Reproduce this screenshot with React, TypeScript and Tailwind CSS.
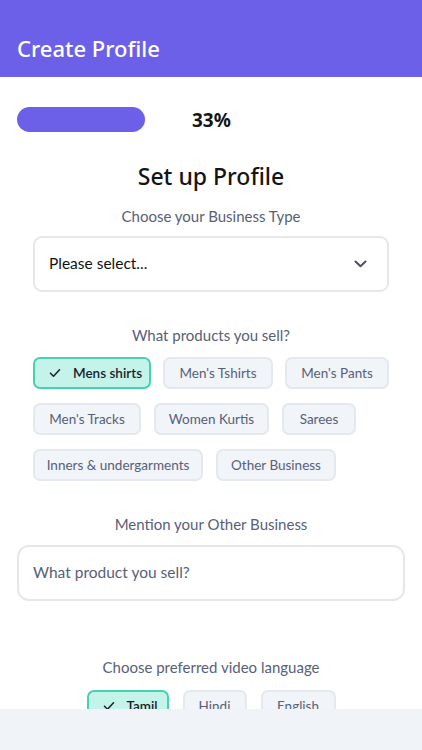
import React from "react";

const Check = () => (
  <svg width="12" height="10" viewBox="0 0 12 10" fill="none" className="shrink-0">
    <path d="M1.5 5.2 L4.5 8.2 L10.5 1.8" stroke="#1f2433" strokeWidth="1.6" strokeLinecap="round" strokeLinejoin="round" />
  </svg>
);

type ChipProps = { label: string; w: string; selected?: boolean };

const Chip = ({ label, w, selected }: ChipProps) =>
  selected ? (
    <div className={`${w} h-[32px] shrink-0 flex items-center gap-[12px] pl-[14px] rounded-[7px] border-2 border-[#48cfb5] bg-[#c4f3ea] text-[13.5px] font-semibold text-[#1a1d2b]`}>
      <Check />
      <span>{label}</span>
    </div>
  ) : (
    <div className={`${w} h-[32px] shrink-0 flex items-center justify-center rounded-[7px] border-2 border-[#e4e8ef] bg-[#f1f4f9] text-[13.5px] text-[#586077]`}>
      {label}
    </div>
  );

export default function App() {
  return (
    <div className="w-[422px] h-[750px] overflow-hidden bg-white flex flex-col relative" style={{ fontFamily: "Lato, 'Noto Sans', sans-serif" }}>
      <div className="h-[77px] bg-[#6c5fe8] flex items-end px-[17px] pb-[14px] shrink-0">
        <h1 className="text-white text-[22px] font-medium leading-[30px]" style={{ fontFamily: "'Noto Sans', sans-serif" }}>
          Create Profile
        </h1>
      </div>

      <div className="flex items-center mt-[30px] px-[17px]">
        <div className="w-[128px] h-[25px] rounded-full bg-[#6c5fe8]" />
        <div className="ml-[47px] text-[19px] font-bold text-[#141414] leading-[24px]" style={{ fontFamily: "'Noto Sans', sans-serif" }}>
          33%
        </div>
      </div>

      <div className="mt-[29px] text-center text-[23px] font-medium text-[#141414] leading-[30px]" style={{ fontFamily: "'Noto Sans', sans-serif" }}>
        Set up Profile
      </div>

      <div className="mt-[15px] text-center text-[15px] text-[#586077] leading-[20px]">
        Choose your Business Type
      </div>

      <div className="mt-[10px] mx-[33px] h-[56px] rounded-[9px] border-2 border-[#e5e7eb] flex items-center justify-between pl-[14px] pr-[20px]">
        <span className="text-[15.5px] text-[#111]">Please select...</span>
        <svg width="13" height="8" viewBox="0 0 13 8" fill="none">
          <path d="M1.5 1.5 L6.5 6.2 L11.5 1.5" stroke="#4b5068" strokeWidth="2" strokeLinecap="round" strokeLinejoin="round" />
        </svg>
      </div>

      <div className="mt-[33px] text-center text-[15px] text-[#586077] leading-[20px]">
        What products you sell?
      </div>

      <div className="mt-[12px] px-[33px] flex flex-col gap-[14px]">
        <div className="flex gap-[12px]">
          <Chip label="Mens shirts" w="w-[118px]" selected />
          <Chip label="Men's Tshirts" w="w-[110px]" />
          <Chip label="Men's Pants" w="w-[104px]" />
        </div>
        <div className="flex gap-[13px]">
          <Chip label="Men's Tracks" w="w-[108px]" />
          <Chip label="Women Kurtis" w="w-[115px]" />
          <Chip label="Sarees" w="w-[74px]" />
        </div>
        <div className="flex gap-[13px]">
          <Chip label="Inners & undergarments" w="w-[170px]" />
          <Chip label="Other Business" w="w-[120px]" />
        </div>
      </div>

      <div className="mt-[33px] text-center text-[15px] text-[#586077] leading-[20px]">
        Mention your Other Business
      </div>

      <div className="mt-[11px] mx-[17px] h-[56px] rounded-[12px] border-2 border-[#e5e7eb] flex items-center px-[14px]">
        <span className="text-[15.5px] text-[#586077]">What product you sell?</span>
      </div>

      <div className="mt-[56px] text-center text-[15px] text-[#586077] leading-[20px]">
        Choose preferred video language
      </div>

      <div className="mt-[13px] flex justify-center gap-[14px]">
        <Chip label="Tamil" w="w-[82px]" selected />
        <Chip label="Hindi" w="w-[64px]" />
        <Chip label="English" w="w-[75px]" />
      </div>

      <div className="absolute left-0 right-0 bottom-0 h-[41px] bg-[#f0f3f8]" />
    </div>
  );
}
